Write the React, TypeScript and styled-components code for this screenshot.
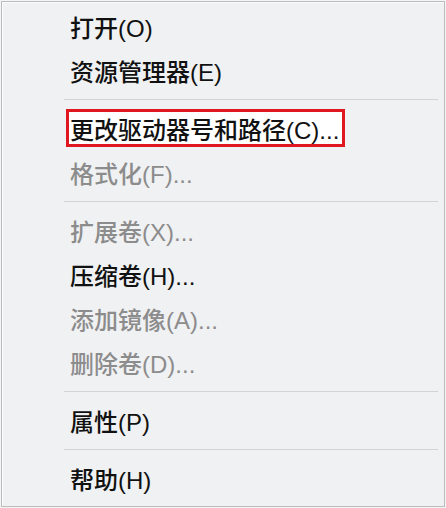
import styled, { createGlobalStyle } from 'styled-components';

const GlobalStyle = createGlobalStyle`
  html, body {
    margin: 0;
    padding: 0;
    background: #f4f5f7;
  }
`;

const Menu = styled.div`
  box-sizing: border-box;
  width: 444px;
  height: 506px;
  margin: 1px 0 0 1px;
  padding: 2px 2px 0 2px;
  background: #f0f1f3;
  border: 1px solid #bcbcbc;
  box-shadow: inset 1px 1px 0 #fbfbfb;
  display: flex;
  flex-direction: column;
  font-family: "Liberation Sans", "Noto Sans CJK SC", sans-serif;
`;

const Item = styled.div<{ $disabled?: boolean }>`
  height: 44px;
  display: flex;
  align-items: center;
  padding-left: 66px;
  font-size: 24px;
  font-weight: 500;
  color: ${(p) => (p.$disabled ? '#8c8c8c' : '#111111')};
  white-space: nowrap;
`;

const Highlight = styled.span`
  display: inline-flex;
  align-items: center;
  height: 38px;
  margin-left: -4px;
  padding: 0 3px 0 1px;
  border: 3px solid #e01620;
  box-sizing: border-box;
  background: #ffffff;
`;

const Separator = styled.div`
  height: 14px;
  display: flex;
  align-items: center;
  padding-left: 60px;
  padding-right: 4px;

  &::after {
    content: '';
    flex: 1;
    height: 1px;
    background: #d3d4d6;
  }
`;

type Entry = { label: string; disabled?: boolean; marked?: boolean } | 'sep';

const entries: Entry[] = [
  { label: '打开(O)' },
  { label: '资源管理器(E)' },
  'sep',
  { label: '更改驱动器号和路径(C)...', marked: true },
  { label: '格式化(F)...', disabled: true },
  'sep',
  { label: '扩展卷(X)...', disabled: true },
  { label: '压缩卷(H)...' },
  { label: '添加镜像(A)...', disabled: true },
  { label: '删除卷(D)...', disabled: true },
  'sep',
  { label: '属性(P)' },
  'sep',
  { label: '帮助(H)' },
];

export default function App() {
  return (
    <>
      <GlobalStyle />
      <Menu>
        {entries.map((e, i) =>
          e === 'sep' ? (
            <Separator key={i} />
          ) : (
            <Item key={i} $disabled={e.disabled}>
              {e.marked ? <Highlight>{e.label}</Highlight> : e.label}
            </Item>
          )
        )}
      </Menu>
    </>
  );
}
